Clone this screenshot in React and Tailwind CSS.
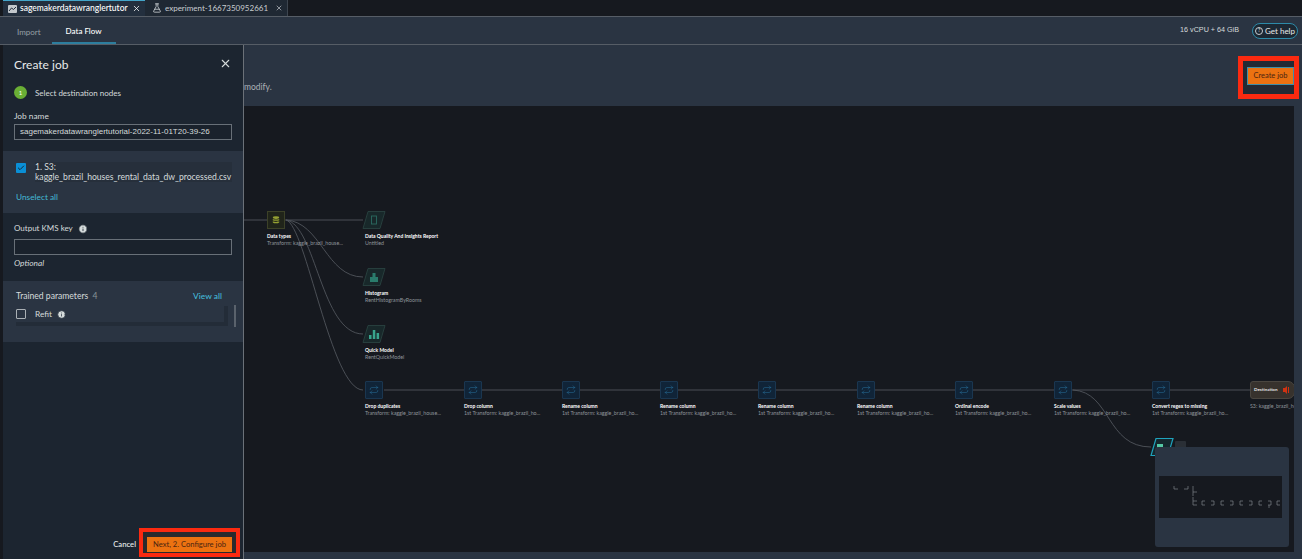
import { X, FlaskConical, Info, Check, Repeat } from "lucide-react";

const font = "font-['Lato','Liberation_Sans',sans-serif]";

const rowNodes = [
  { x: 364, title: "Drop duplicates", sub: "Transform: kaggle_brazil_house..." },
  { x: 463, title: "Drop column", sub: "1st Transform: kaggle_brazil_ho..." },
  { x: 561, title: "Rename column", sub: "1st Transform: kaggle_brazil_ho..." },
  { x: 659, title: "Rename column", sub: "1st Transform: kaggle_brazil_ho..." },
  { x: 757, title: "Rename column", sub: "1st Transform: kaggle_brazil_ho..." },
  { x: 856, title: "Rename column", sub: "1st Transform: kaggle_brazil_ho..." },
  { x: 954, title: "Ordinal encode", sub: "1st Transform: kaggle_brazil_ho..." },
  { x: 1053, title: "Scale values", sub: "1st Transform: kaggle_brazil_ho..." },
  { x: 1151, title: "Convert regex to missing", sub: "1st Transform: kaggle_brazil_ho..." },
];

const analysisNodes = [
  { y: 211, title: "Data Quality And Insights Report", sub: "Untitled", icon: "report" },
  { y: 268, title: "Histogram", sub: "RentHistogramByRooms", icon: "hist" },
  { y: 325, title: "Quick Model", sub: "RentQuickModel", icon: "bars" },
];

const miniBrackets = [1201, 1210, 1220, 1229, 1239, 1248, 1258, 1267, 1276];

function Label({ title, sub }) {
  return (
    <div className="mt-[4px] whitespace-nowrap">
      <div className="text-[5px] leading-[7px] font-bold text-white">{title}</div>
      <div className="text-[5.3px] leading-[7px] text-[#8f949a]">{sub}</div>
    </div>
  );
}

function Para({ selected, children }) {
  return (
    <svg width="24" height="18" viewBox="0 0 24 18" className="block">
      <polygon
        points="6,0.5 23,0.5 18,17.5 1,17.5"
        fill={selected ? "#14282e" : "#18282a"}
        stroke={selected ? "#1fa3bd" : "#2c4644"}
        strokeWidth={selected ? 1.2 : 0.8}
      />
      {children}
    </svg>
  );
}

function NodeIcon({ type }) {
  if (type === "report") {
    return <rect x="9.5" y="5" width="5" height="8" fill="none" stroke="#2a6b60" strokeWidth="0.9" />;
  }
  if (type === "hist") {
    return <path d="M8 14V9h2.5V5h3v4H16v5z" fill="#2a7c6c" />;
  }
  return (
    <g fill="#39a58d">
      <rect x="7" y="10" width="2.5" height="4" />
      <rect x="10.8" y="5" width="2.5" height="9" />
      <rect x="14.6" y="8" width="2.5" height="6" />
    </g>
  );
}

function Canvas() {
  return (
    <div className="relative flex-1 overflow-hidden bg-[#16191f]">
      <svg width="1051" height="446" viewBox="243 106 1051 446" className="absolute left-0 top-0" fill="none">
        <g stroke="#50555b" strokeWidth="0.9">
          <path d="M243 220H266M284 220H362" />
          <path d="M285 220C320 222 325 277 362 277" />
          <path d="M285 220C315 225 320 334 362 334" />
          <path d="M285 220C305 225 330 390 362 390" />
          <path d="M383 390H1249" />
          <path d="M1072 390C1110 392 1105 447 1150 447" />
        </g>
      </svg>

      <div className="absolute left-[23px] top-[105px]">
        <div className="flex h-[18px] w-[18px] items-center justify-center border border-[#3c4128] bg-[#20241a]">
          <svg width="8" height="8" viewBox="0 0 10 10" fill="#94a032">
            <ellipse cx="5" cy="2" rx="4" ry="1.6" />
            <path d="M1 3.6c1 1 7 1 8 0v1.6c-1 1-7 1-8 0zM1 6.6c1 1 7 1 8 0v1.4c-1 1.4-7 1.4-8 0z" />
          </svg>
        </div>
        <Label title="Data types" sub="Transform: kaggle_brazil_house..." />
      </div>

      {analysisNodes.map((n) => (
        <div key={n.title} className="absolute left-[118px]" style={{ top: n.y - 106 }}>
          <Para>
            <NodeIcon type={n.icon} />
          </Para>
          <div className="ml-[3px]">
            <Label title={n.title} sub={n.sub} />
          </div>
        </div>
      ))}

      {rowNodes.map((n) => (
        <div key={n.x} className="absolute top-[275px]" style={{ left: n.x - 243 }}>
          <div className="flex h-[18px] w-[18px] items-center justify-center rounded-[1px] border border-[#1a3650] bg-[#102438]">
            <Repeat size={10} strokeWidth={1.1} className="text-[#2a7aa8]" />
          </div>
          <Label title={n.title} sub={n.sub} />
        </div>
      ))}

      <div className="absolute left-[1006px] top-[275px]">
        <div className="flex h-[18px] w-[45px] items-center justify-between rounded-l-[3px] rounded-r-[7px] border border-[#4a4640] bg-[#37322d] pl-[3px] pr-[5px]">
          <span className="text-[4.5px] font-bold text-[#e6e6e6]">Destination</span>
          <svg width="6" height="8" viewBox="0 0 6 8" fill="#d13212">
            <path d="M0 2h2l2-2v8L2 6H0zM5 1h1v6H5z" />
          </svg>
        </div>
        <div className="mt-[4px] w-[45px] overflow-hidden whitespace-nowrap text-[5.3px] leading-[7px] text-[#8f949a]">S3: kaggle_brazil_ho</div>
      </div>

      <div className="absolute left-[906px] top-[332px]">
        <Para selected>
          <rect x="7" y="6" width="6" height="4" fill="#55c9a5" />
        </Para>
      </div>
      <div className="absolute left-[931px] top-[335px] h-[14px] w-[11px] rounded-[1px] bg-[#2a2f36]" />

      <div className="absolute left-[911px] top-[341px] flex h-[100px] w-[134px] items-center justify-center rounded-[3px] bg-[#2a3442] pl-[4px] pr-[7px]">
        <div className="h-[42px] w-full bg-[#16191f]">
          <svg width="123" height="42" viewBox="1158 476 123 42" fill="none" stroke="#7c8187" strokeWidth="0.7">
            <path d="M1173 486v3h4M1187 489h-4M1187 486v3M1192 486v6h4M1192 492v4M1192 497v8h4M1192 501h4" />
            {miniBrackets.map((x, i) => (
              <path key={x} d={i % 2 ? `M${x} 501h3v4h-3` : `M${x + 3} 501h-3v4h3`} />
            ))}
            <path d="M1268 505v3" />
          </svg>
        </div>
      </div>
    </div>
  );
}

function Drawer() {
  return (
    <aside className="flex w-[241px] shrink-0 flex-col border-r border-[#6b7178] bg-[#1c2530] text-[8.3px] text-[#d5dbdb]">
      <div className="flex h-[38px] items-center justify-between pl-[11px] pr-[11px] pt-[2px]">
        <span className="text-[12px] text-[#e8eaea]">Create job</span>
        <X size={13} className="-mt-[4px] text-[#d5dbdb]" />
      </div>
      <div className="mt-[3px] flex items-center gap-[8px] pl-[11px]">
        <span className="flex h-[13px] w-[13px] items-center justify-center rounded-full bg-[#6aaf35] text-[6px] text-white">1</span>
        <span className="text-[8px]">Select destination nodes</span>
      </div>
      <div className="mt-[11px] pl-[11px] leading-[13px]">Job name</div>
      <div className="ml-[11px] mt-[1px] flex h-[16px] w-[218px] items-center border border-[#687078] bg-[#1a222c] pl-[5px] font-['Liberation_Sans',sans-serif] text-[8px] whitespace-nowrap">
        sagemakerdatawranglertutorial-2022-11-01T20-39-26
      </div>

      <div className="mt-[11px] h-[62px] bg-[#2a3442] pl-[13px] pt-[11px]">
        <div className="flex gap-[9px]">
          <span className="mt-[1px] flex h-[10px] w-[10px] items-center justify-center rounded-[1px] bg-[#0a8fd6]">
            <Check size={8} strokeWidth={3} className="text-[#12293b]" />
          </span>
          <div className="w-[197px] bg-[#262f3b] text-[8.6px] leading-[10px] whitespace-nowrap">
            <div>1. S3:</div>
            <div>kaggle_brazil_houses_rental_data_dw_processed.csv</div>
          </div>
        </div>
        <div className="mt-[9px] leading-[12px] text-[#44b9d6]">Unselect all</div>
      </div>

      <div className="flex items-center gap-[5px] pl-[11px] pt-[9px] text-[8px] leading-[13px]">
        Output KMS key <Info size={10} fill="#d5dbdb" className="text-[#1c2530]" />
      </div>
      <div className="ml-[11px] mt-[4px] h-[16px] w-[218px] border border-[#687078] bg-[#1a222c]" />
      <div className="mt-[2px] pl-[11px] italic leading-[13px]">Optional</div>

      <div className="mt-[11px] flex h-[61px] gap-[6px] bg-[#2a3442] pl-[13px] pt-[9px]">
        <div className="w-[212px]">
          <div className="flex items-center justify-between pr-[6px] text-[8.6px] leading-[12px]">
            <span>
              Trained parameters <span className="ml-[2px] text-[#879596]">4</span>
            </span>
            <span className="text-[8.4px] font-medium text-[#44b9d6]">View all</span>
          </div>
          <div className="mt-[4px] flex h-[16px] items-center gap-[9px] border-r-4 border-[#232c38]">
            <span className="h-[10px] w-[10px] rounded-[1px] border border-[#aab0b5]" />
            <span className="flex items-center gap-[5px]">
              Refit <Info size={9} fill="#d5dbdb" className="text-[#2a3442]" />
            </span>
          </div>
          <div className="h-[4px] bg-[#232c38]" />
        </div>
        <div className="mt-[15px] h-[22px] w-[2px] bg-[#5a626c]" />
      </div>

      <div className="mb-[2px] mt-auto flex items-center justify-end pr-[3px]">
        <span className="mr-[3px] mt-[4px] text-[7.7px] font-medium text-[#eaeded]">Cancel</span>
        <div className="flex h-[29px] w-[101px] items-center justify-center border-4 border-[#fb2a10] bg-[#2a2a2d]">
          <button className="mt-[4px] h-[15px] w-[85px] bg-[#ec7211] text-[7.6px] leading-none whitespace-nowrap text-[#4a2412]">Next, 2. Configure job</button>
        </div>
      </div>
    </aside>
  );
}

export default function App() {
  return (
    <div className={`flex h-[559px] w-[1302px] flex-col overflow-hidden bg-[#16191f] ${font}`}>
      <div className="flex h-[16px] items-stretch pl-[3px] text-[8.5px]">
        <div className="flex w-[142px] items-center gap-[3px] border-t border-[#44a5c9] bg-[#232f3e] pl-[5px] font-medium text-white">
          <svg width="9" height="8" viewBox="0 0 9 8" className="shrink-0">
            <rect width="9" height="8" rx="1" fill="#c3c8cc" />
            <path d="M1 6l2.5-3 2 1.5L8 2" fill="none" stroke="#232f3e" strokeWidth="1" />
          </svg>
          <span className="whitespace-nowrap">sagemakerdatawranglertutor</span>
          <X size={9} className="ml-auto mr-[4px] shrink-0" />
        </div>
        <div className="flex w-[143px] items-center gap-[3px] border-r border-[#3d454f] bg-[#1f2833] pl-[7px] text-[8px] text-[#c8ccd0]">
          <FlaskConical size={10} className="shrink-0" />
          <span className="whitespace-nowrap">experiment-1667350952661</span>
          <X size={8} className="ml-auto mr-[4px] shrink-0" />
        </div>
      </div>

      <div className="flex h-[29px] items-center border-y border-[#565d66] bg-[#2a3442] pl-[3px] pr-[4px] text-[8px]">
        <div className="flex h-full items-center pl-[14px] pt-[3px] text-[#97a0a6]">Import</div>
        <div className="ml-[11px] flex h-full items-center border-b-2 border-[#2d7e9e] px-[14px] pt-[3px] font-medium text-white">Data Flow</div>
        <span className="ml-auto font-['Liberation_Sans',sans-serif] text-[7.2px] text-[#d5dbdb]">16 vCPU + 64 GiB</span>
        <span className="ml-[13px] flex h-[16px] w-[46px] items-center justify-center gap-[2px] rounded-full border border-[#2d8aa8] bg-[#1c2833] text-[8px] text-[#e8eaea]">
          <span className="flex h-[8px] w-[8px] shrink-0 items-center justify-center rounded-full border border-[#c8ccd0] text-[5px]">?</span>
          <span className="whitespace-nowrap">Get help</span>
        </span>
      </div>

      <div className="flex min-h-0 flex-1 pl-[3px]">
        <Drawer />
        <main className="flex min-w-0 flex-1 flex-col bg-[#2a3442] pb-[7px] pr-[8px]">
          <div className="flex h-[61px] shrink-0 items-start justify-between">
            <span className="pt-[36px] text-[8.5px] text-[#aab0b5]">modify.</span>
            <div className="mr-[-5px] mt-[11px] flex h-[43px] w-[61px] items-center justify-end border-[5px] border-[#fb2a10] bg-[#232a34]">
              <button className="mb-[3px] h-[18px] w-[47px] border border-[#3f8fa8] bg-[#ec7211] text-[7.5px] leading-none whitespace-nowrap text-[#4a2412]">Create job</button>
            </div>
          </div>
          <Canvas />
        </main>
      </div>
    </div>
  );
}
